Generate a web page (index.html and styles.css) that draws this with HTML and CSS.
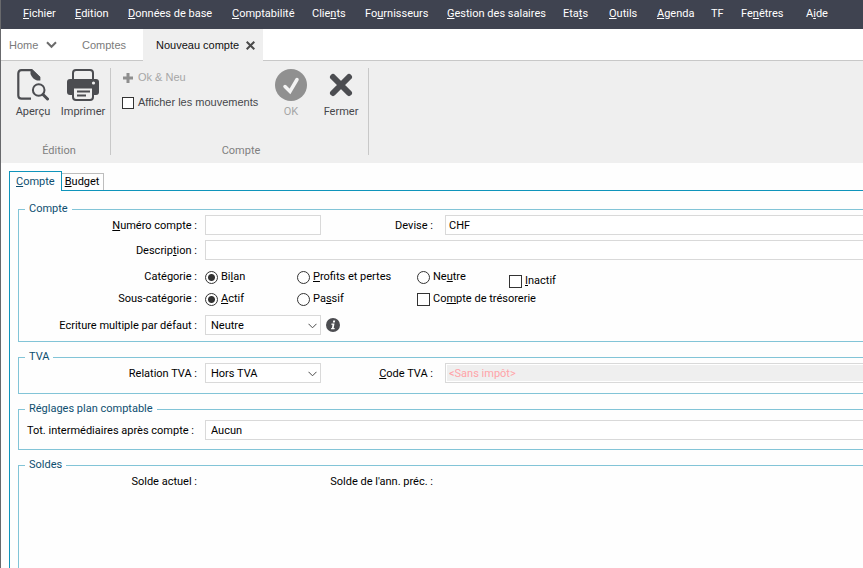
FILE: index.html
```html
<!DOCTYPE html>
<html lang="fr">
<head>
<meta charset="utf-8">
<title>Nouveau compte</title>
<link rel="stylesheet" href="styles.css">
</head>
<body>
<div class="window">
  <nav class="menubar">
    <a href="#"><u>F</u>ichier</a>
    <a href="#"><u>E</u>dition</a>
    <a href="#"><u>D</u>onnées de base</a>
    <a href="#"><u>C</u>omptabilité</a>
    <a href="#">Clie<u>n</u>ts</a>
    <a href="#">Fo<u>u</u>rnisseurs</a>
    <a href="#"><u>G</u>estion des salaires</a>
    <a href="#">Eta<u>t</u>s</a>
    <a href="#"><u>O</u>utils</a>
    <a href="#"><u>A</u>genda</a>
    <a href="#">TF</a>
    <a href="#">Fe<u>n</u>êtres</a>
    <a href="#">A<u>i</u>de</a>
  </nav>

  <div class="doc-tabs">
    <button type="button" class="doc-tab home">Home
      <svg class="chevron" viewBox="0 0 11 8" aria-hidden="true"><path d="M1 1.2l4.5 4.6L10 1.2" fill="none" stroke="#6b6b6b" stroke-width="2"/></svg>
    </button>
    <button type="button" class="doc-tab comptes">Comptes</button>
    <button type="button" class="doc-tab active">Nouveau compte
      <svg class="close" viewBox="0 0 9 9" aria-hidden="true"><path d="M.7.7l7.600 7.600M8.300.7L.7 8.300" fill="none" stroke="#4a4a4a" stroke-width="2"/></svg>
    </button>
  </div>

  <div class="ribbon">
    <section class="group edition">
      <div class="group-items">
        <button type="button" class="big">
          <svg viewBox="0 0 32 32" aria-hidden="true">
            <path d="M14 29.700H4.500Q1.300 29.700 1.300 26.500V4.500Q1.300 1.200 4.500 1.200H14.500L22 8.500V11" fill="none" stroke="#4c4d51" stroke-width="2.200"/>
            <path d="M13.500 0.500H15.500L23.300 8V11.500H20Q15.500 10 13.500 5z" fill="#4c4d51"/>
            <circle cx="21.700" cy="21" r="5.800" fill="none" stroke="#4c4d51" stroke-width="2"/>
            <path d="M26 25.500l4.500 4.500" stroke="#4c4d51" stroke-width="3" stroke-linecap="round"/>
          </svg>
          Aperçu
        </button>
        <button type="button" class="big">
          <svg viewBox="0 0 32 32" aria-hidden="true">
            <path d="M6 11V4Q6 1 9 1h14Q26 1 26 4V11" fill="none" stroke="#4c4d51" stroke-width="2"/>
            <path d="M3 10h26q3 0 3 3v10q0 3-3 3H3q-3 0-3-3V13q0-3 3-3z" fill="#4c4d51"/>
            <circle cx="26.500" cy="14" r="1.600" fill="#efefef"/>
            <path d="M6 18.500h20V28q0 3-3 3H9q-3 0-3-3z" fill="#efefef" stroke="#4c4d51" stroke-width="2"/>
            <path d="M10 22.500h13M10 26.500h9" stroke="#4c4d51" stroke-width="2"/>
          </svg>
          Imprimer
        </button>
      </div>
      <h2>Édition</h2>
    </section>
    <section class="group compte">
      <div class="group-items">
        <div class="stack">
          <button type="button" class="small" disabled>
            <svg viewBox="0 0 10 10" aria-hidden="true"><path d="M5 0v10M0 5h10" stroke="#8e8e8e" stroke-width="3"/></svg>
            Ok &amp; Neu
          </button>
          <label class="small"><input type="checkbox"> Afficher les mouvements</label>
        </div>
        <button type="button" class="big" disabled>
          <svg viewBox="0 0 32 32" aria-hidden="true"><circle cx="16" cy="16" r="16" fill="#909090"/><path d="M10 17.500l5 5L22 10.500" fill="none" stroke="#f4f4f4" stroke-width="3.500" stroke-linecap="round"/></svg>
          OK
        </button>
        <button type="button" class="big">
          <svg viewBox="0 0 32 32" aria-hidden="true"><path d="M8 8l16 16M24 8L8 24" stroke="#4c4d51" stroke-width="6" stroke-linecap="round"/></svg>
          Fermer
        </button>
      </div>
      <h2>Compte</h2>
    </section>
  </div>

  <main class="content">
    <div class="page-tabs" role="tablist">
      <button type="button" role="tab" aria-selected="true" class="page-tab selected"><u>C</u>ompte</button>
      <button type="button" role="tab" aria-selected="false" class="page-tab"><u>B</u>udget</button>
    </div>
    <form class="panel">
      <fieldset>
        <legend>Compte</legend>
        <div class="row">
          <label for="numero"><u>N</u>uméro compte :</label>
          <input type="text" id="numero">
          <label for="devise" class="second">Devise :</label>
          <select id="devise" class="wide"><option>CHF</option></select>
        </div>
        <div class="row gap-5">
          <label for="description">Descrip<u>t</u>ion :</label>
          <input type="text" id="description" class="wide span">
        </div>
        <div class="row choices gap-6" role="radiogroup" aria-labelledby="categorie">
          <span class="label" id="categorie">Catégorie :</span>
          <label class="choice"><input type="radio" name="cat" checked><span>Bi<u>l</u>an</span></label>
          <label class="choice"><input type="radio" name="cat"><span><u>P</u>rofits et pertes</span></label>
          <label class="choice"><input type="radio" name="cat"><span>Ne<u>u</u>tre</span></label>
          <label class="choice low"><input type="checkbox"><span><u>I</u>nactif</span></label>
        </div>
        <div class="row choices gap-2" role="radiogroup" aria-labelledby="sous">
          <span class="label" id="sous">Sous-catégorie :</span>
          <label class="choice"><input type="radio" name="sous" checked><span><u>A</u>ctif</span></label>
          <label class="choice"><input type="radio" name="sous"><span>Pa<u>s</u>sif</span></label>
          <label class="choice treasury"><input type="checkbox"><span>Co<u>m</u>pte de trésorerie</span></label>
        </div>
        <div class="row gap-7">
          <label for="ecriture">Ecriture multiple par défaut :</label>
          <span class="combo">
            <select id="ecriture"><option>Neutre</option></select>
            <svg viewBox="0 0 9 6" aria-hidden="true"><path d="M.5.8l4 4 4-4" fill="none" stroke="#4a4a4a"/></svg>
          </span>
          <svg class="info" viewBox="0 0 14 14" aria-hidden="true"><circle cx="7" cy="7" r="7" fill="#4c4d51"/><path d="M7.200 2.500h2l-.4 2h-2zM5.500 5.500h3L7.700 10h1l-.2 1.200H5l.2-1.200h.7l.6-3.300h-1.200z" fill="#fff"/></svg>
        </div>
      </fieldset>

      <fieldset class="tva">
        <legend>TVA</legend>
        <div class="row">
          <label for="relation">Relation TVA :</label>
          <span class="combo">
            <select id="relation"><option>Hors TVA</option></select>
            <svg viewBox="0 0 9 6" aria-hidden="true"><path d="M.5.8l4 4 4-4" fill="none" stroke="#4a4a4a"/></svg>
          </span>
          <label for="code" class="second"><u>C</u>ode TVA :</label>
          <select id="code" class="wide" disabled><option>&lt;Sans impôt&gt;</option></select>
        </div>
      </fieldset>

      <fieldset class="plan">
        <legend>Réglages plan comptable</legend>
        <div class="row">
          <label for="total" class="total">Tot. intermédiaires après compte :</label>
          <select id="total" class="wide span"><option>Aucun</option></select>
        </div>
      </fieldset>

      <fieldset class="soldes">
        <legend>Soldes</legend>
        <div class="row">
          <span class="label">Solde actuel :</span>
          <span class="label second previous">Solde de l'ann. préc. :</span>
        </div>
      </fieldset>
    </form>
  </main>
</div>
</body>
</html>
```
FILE: styles.css
```css
* { box-sizing: border-box; }

body {
  margin: 0;
  background: #fefefe;
  color: #000;
  font-family: Roboto, "Liberation Sans", Arial, sans-serif;
  font-size: 11px;
  line-height: 20px;
}

button, input, select { font: inherit; color: inherit; margin: 0; }
button { border: 0; background: none; padding: 0; }
u { text-underline-offset: 1px; }

.window {
  display: flex;
  flex-direction: column;
  min-height: 100vh;
  border-left: 1px solid #68696c;
  overflow: hidden;
}

.menubar {
  display: grid;
  grid-template-columns: 52px 53px 104px 80px 53px 82px 116px 46px 48px 54px 30px 65px 1fr;
  height: 29px;
  padding-left: 22px;
  background: #3f4350;
  line-height: 27px;
  white-space: nowrap;
}
.menubar a { color: #fff; text-decoration: none; }

.doc-tabs, .stack { font-family: "Liberation Sans", Arial, sans-serif; }

.doc-tabs {
  display: flex;
  height: 32px;
  background: #fff;
  color: #7a7a7a;
  box-shadow: inset 0 -1px #c8c8c8;
}
.doc-tab { display: flex; align-items: center; gap: 7px; }
.doc-tab.home { width: 72px; padding-left: 8px; gap: 8px; }
.doc-tab.comptes { width: 70px; padding-left: 9px; }
.doc-tab.active { width: 120px; padding-left: 13px; background: #efefef; color: #111; white-space: nowrap; }
.chevron { width: 11px; height: 8px; }
.close { width: 9px; height: 9px; flex: none; }

.ribbon {
  display: flex;
  height: 102px;
  padding: 7px 0 8px;
  background: #efefef;
  color: #46474b;
}
.group {
  display: flex;
  flex-direction: column;
  justify-content: space-between;
  border-right: 1px solid #c8c8c8;
}
.group-items { display: flex; }
.group.edition { padding-left: 7px; width: 110px; }
.group.compte { width: 258px; padding: 0 8px 0 11px; }
.group h2 {
  margin: 0;
  font-size: 11px;
  font-weight: normal;
  line-height: 8px;
  text-align: center;
  color: #7f7f7f;
}
.big {
  display: flex;
  flex-direction: column;
  align-items: center;
  gap: 4px;
  flex: none;
  width: 50px;
  line-height: 14px;
}
.big svg { width: 32px; height: 32px; margin-top: 1px; }
.big:disabled, .small:disabled { color: #a6a6a6; }
.stack { display: flex; flex: none; flex-direction: column; gap: 6px; width: 144px; }
.small { display: flex; align-items: center; gap: 5px; height: 19px; line-height: 19px; white-space: nowrap; }
.small svg { width: 10px; height: 10px; margin-left: 1px; }
.small input[type="checkbox"] { margin-right: -1px; }

.content { display: flex; flex: 1; flex-direction: column; padding: 8px 0 0 8px; }
.page-tabs { display: flex; align-items: flex-end; height: 19px; }
.page-tab {
  height: 17px;
  padding: 0 4px 0 3px;
  border: 1px solid #bdbdbd;
  border-left: 0;
  border-bottom: 0;
  line-height: 16px;
}
.page-tab.selected {
  position: relative;
  z-index: 1;
  height: 20px;
  margin-bottom: -1px;
  padding: 0 6px;
  border: 1px solid #0f94bb;
  border-bottom: 0;
  background: #fefefe;
  color: #0e4e70;
}
.panel {
  display: flex;
  flex: 1;
  flex-direction: column;
  gap: 9px;
  padding: 12px 0 0 8px;
  border: solid #0f94bb;
  border-width: 1px 0 0 1px;
}

fieldset {
  min-width: 0;
  margin: 0;
  padding: 0 0 6px;
  border: solid #82c4d7;
  border-width: 1px 0 1px 1px;
}
legend { margin-left: 6px; padding: 0 4px; line-height: 12px; color: #0e4e70; }
.tva { padding-bottom: 10px; }
.plan { padding: 5px 0 9px; }
.soldes { flex: 1; border-bottom: 0; }

.row {
  display: grid;
  grid-template-columns: 178px 116px 108px 1fr;
  column-gap: 8px;
  align-items: center;
  min-height: 20px;
}
.row.choices { grid-template-columns: 178px 84px 112px 84px 1fr; }
.gap-2 { margin-top: 2px; }
.gap-5 { margin-top: 5px; }
.gap-6 { margin-top: 6px; }
.gap-7 { margin-top: 7px; }
.row > label:not(.choice), .label { text-align: right; white-space: nowrap; }
.row > .second { padding-right: 4px; }
.row > .total { padding-right: 3px; }
.row > .previous { grid-column: 3; justify-self: end; }
.span { grid-column: 2 / -1; }

/* The taller line drops captions onto the baseline of the field text. */
.row > label, .label { margin-bottom: -2px; line-height: 22px; }

input[type="text"], select {
  width: 100%;
  min-width: 0;
  height: 20px;
  padding: 0 5px;
  border: 1px solid #d9d9d9;
  border-radius: 0;
  background: #fff;
  appearance: none;
}
select.wide, input.wide { border-right: 0; }
#devise, #code { padding-left: 3px; }
select:disabled {
  background: #efefef;
  box-shadow: inset 1px 1px #fff, inset 0 -1px #fff;
  color: #ffa3a8;
  opacity: 1;
}
.combo { position: relative; display: flex; }
.combo svg { position: absolute; right: 4px; top: 8px; width: 9px; height: 6px; pointer-events: none; }
.info { width: 14px; height: 14px; margin-left: -3px; }

.choice { display: flex; align-items: center; gap: 3px; white-space: nowrap; }
.row > .low { margin: 4px 0 -6px; }
.treasury { grid-column: 4 / -1; }
input[type="radio"], input[type="checkbox"] {
  flex: none;
  width: 13px;
  height: 13px;
  border: 1px solid #333;
  background: #fff;
  appearance: none;
}
input[type="radio"] { border-radius: 50%; }
input[type="radio"]:checked { background: radial-gradient(circle, #333 0 3px, #fff 4px); }
.small input[type="checkbox"] { width: 12px; height: 12px; }
```
